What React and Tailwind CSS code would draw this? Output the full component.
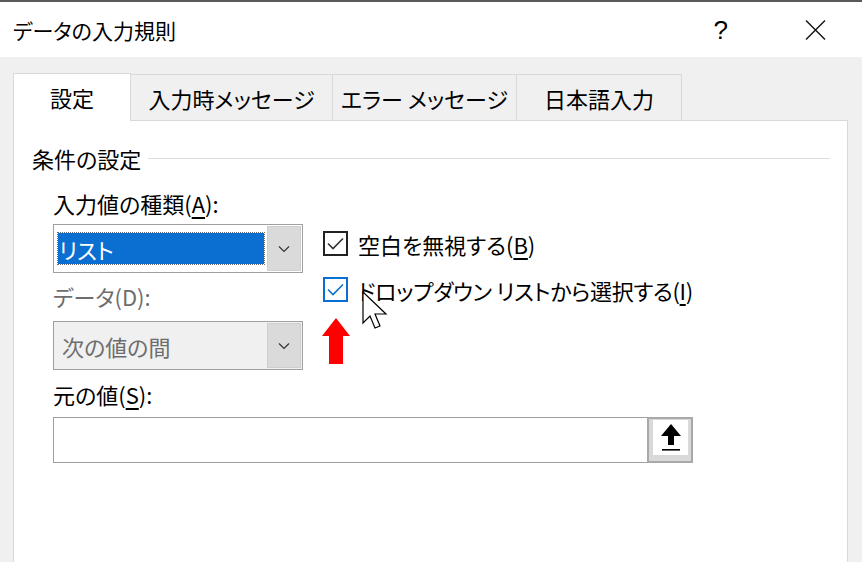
import React from 'react';

const font = { fontFamily: '"Noto Sans CJK JP", "Noto Sans", sans-serif' };

function Chevron() {
  return (
    <svg width="12" height="8" viewBox="0 0 12 8">
      <path d="M1 1.5 L6 6.5 L11 1.5" fill="none" stroke="#333" strokeWidth="1.2" />
    </svg>
  );
}

function Check({ color }) {
  return (
    <svg width="17" height="13" viewBox="0 0 17 13">
      <path d="M1 6.5 L6 11.5 L16 1.5" fill="none" stroke={color} strokeWidth="1.6" />
    </svg>
  );
}

function Select({ children, disabled }) {
  return (
    <div
      className={`flex h-[49px] w-[250px] border border-[#a0a0a0] p-[1px] ${
        disabled ? 'bg-[#f0f0f0]' : 'bg-white'
      }`}
    >
      <div className="flex flex-1 items-center pl-[3px] pr-[3px]">{children}</div>
      <div className="flex w-[34px] items-center justify-center border border-[#cfcfcf] bg-[#dadada]">
        <Chevron />
      </div>
    </div>
  );
}

export default function App() {
  return (
    <div
      className="relative h-[562px] w-[862px] overflow-hidden bg-[#f0f0f0] text-black [font-feature-settings:'palt']"
      style={font}
    >
      {/* title bar */}
      <div className="flex h-[57px] items-center border-t-2 border-[#5a5a5a] bg-white">
        <div className="pl-[13px] text-[21px] leading-[30px]">データの入力規則</div>
        <div className="ml-auto flex items-center">
          <span className="text-[26px] leading-[30px]" style={{ fontFamily: '"Liberation Sans", sans-serif' }}>
            ?
          </span>
          <svg className="ml-[77px] mr-[36px]" width="21" height="20" viewBox="0 0 21 20">
            <path d="M1 0.5 L20 19.5 M20 0.5 L1 19.5" stroke="#111" strokeWidth="1.4" />
          </svg>
        </div>
      </div>

      {/* tabs */}
      <div className="pl-[13px] pt-[15px]">
        <div className="flex h-[48px] items-end text-[22px] leading-[30px]">
          <div className="relative z-10 -mb-px flex h-[48px] w-[118px] items-center justify-center border border-b-0 border-[#d9d9d9] bg-white pb-[1px]">
            設定
          </div>
          <div className="flex h-[46px] w-[202px] items-center justify-center border-t border-r border-[#d9d9d9]">
            入力時メッセージ
          </div>
          <div className="flex h-[46px] w-[184px] items-center justify-center border-t border-r border-[#d9d9d9]">
            エラー メッセージ
          </div>
          <div className="flex h-[46px] w-[165px] items-center justify-center border-t border-r border-[#d9d9d9]">
            日本語入力
          </div>
        </div>

        {/* panel */}
        <div className="h-[460px] w-[835px] border border-[#d9d9d9] bg-white pt-[22px]">
          <div className="flex items-center pl-[18px] pr-[17px] text-[22px] leading-[30px]">
            <span>条件の設定</span>
            <div className="ml-[7px] h-px flex-1 bg-[#dcdcdc]" />
          </div>

          <div className="pl-[39px] pt-[15px] text-[22px]">
            <div className="flex">
              {/* left column */}
              <div className="flex w-[250px] flex-col">
                <div className="h-[30px] leading-[30px]">
                  入力値の種類(<u className="underline-offset-4">A</u>):
                </div>
                <div className="mt-[6px]">
                  <Select>
                    <div className="flex h-[31px] w-full items-center bg-[#0a6fd0] pl-[1px] leading-[30px] text-white outline-1 outline-dotted outline-[#6a6a6a]">
                      リスト
                    </div>
                  </Select>
                </div>
                <div className="mt-[8px] h-[30px] leading-[30px] text-[#6d6d6d]">データ(D):</div>
                <div className="mt-[10px]">
                  <Select disabled>
                    <div className="pl-[4px] leading-[30px] text-[#6d6d6d]">次の値の間</div>
                  </Select>
                </div>
              </div>

              {/* right column */}
              <div className="ml-[20px] flex flex-col pt-[43px]">
                <div className="flex h-[25px] items-center">
                  <div className="flex h-[25px] w-[25px] items-center justify-center border-2 border-[#222]">
                    <Check color="#333" />
                  </div>
                  <span className="ml-[10px] leading-[30px]">
                    空白を無視する(<u className="underline-offset-4">B</u>)
                  </span>
                </div>
                <div className="mt-[21px] flex h-[25px] items-center">
                  <div className="flex h-[25px] w-[25px] items-center justify-center border-2 border-[#0a6fd0]">
                    <Check color="#0a6fd0" />
                  </div>
                  <span className="ml-[10px] leading-[30px] tracking-[-0.3px]">
                    ドロップダウン リストから選択する(<u className="underline-offset-4">I</u>)
                  </span>
                </div>
                <svg className="mt-[16px] -ml-[1px]" width="28" height="46" viewBox="0 0 28 46">
                  <polygon points="14,0 28,18 21,18 21,46 7,46 7,18 0,18" fill="#ff0000" />
                </svg>
              </div>
            </div>

            <div className="mt-[9px] h-[30px] leading-[30px]">
              元の値(<u className="underline-offset-4">S</u>):
            </div>
            <div className="mt-[8px] flex h-[46px] w-[640px] border border-[#a0a0a0] bg-white">
              <div className="flex-1" />
              <div className="w-[46px] -my-px -mr-px border-2 border-[#a8a8a8] bg-[#d9d9d9] pl-[4px] pt-[1px]">
                <div className="flex h-[35px] w-[35px] items-center justify-center bg-white">
                  <svg width="22" height="30" viewBox="0 0 22 30">
                    <polygon points="11,1 21,13 14,13 14,22 8,22 8,13 1,13" fill="#000" />
                    <rect x="2" y="26" width="18" height="1.6" fill="#000" />
                  </svg>
                </div>
              </div>
            </div>
          </div>
        </div>
      </div>

      {/* mouse cursor */}
      <svg className="absolute left-[362px] top-[291px]" width="27" height="42" viewBox="0 0 27 42">
        <path
          d="M1 1 L1 32 L8 25 L13 37 L18 35 L13 23 L24 23 Z"
          fill="#fff"
          stroke="#000"
          strokeWidth="1.2"
          strokeLinejoin="miter"
        />
      </svg>
    </div>
  );
}
